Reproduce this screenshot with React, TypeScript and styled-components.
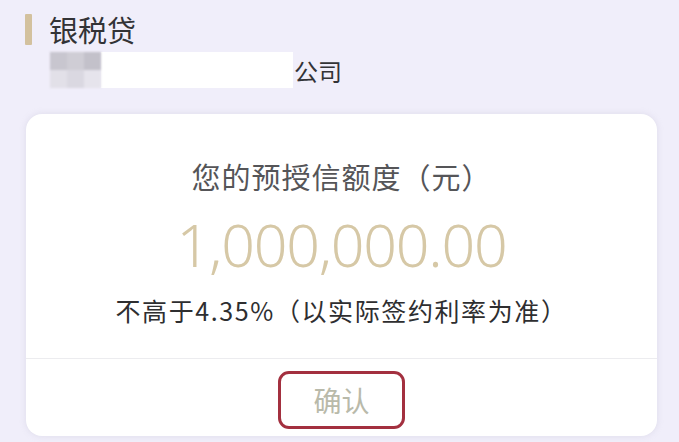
import styled, { createGlobalStyle } from 'styled-components'

const GlobalStyle = createGlobalStyle`
  html, body {
    margin: 0;
    padding: 0;
    background: #f0eefa;
  }
  body {
    font-family: "Noto Sans CJK SC", "Noto Sans", sans-serif;
    width: 679px;
    height: 442px;
    overflow: hidden;
  }
`

const MOSAIC = ['#c8c6cf', '#cfcdd5', '#c3c1ca', '#e2e0e8', '#dad8e1', '#e6e4ec']

const App = () => {
  return (
    <Page>
      <GlobalStyle />
      <Header>
        <Accent />
        <Title>银税贷</Title>
      </Header>
      <CompanyRow>
        <Mosaic>
          {MOSAIC.map((c, i) => (
            <Tile key={i} $color={c} />
          ))}
        </Mosaic>
        <Masked />
        <CompanyName>公司</CompanyName>
      </CompanyRow>
      <Card>
        <CardBody>
          <Label>您的预授信额度（元）</Label>
          <Amount>1,000,000.00</Amount>
          <Rate>不高于4.35%（以实际签约利率为准）</Rate>
        </CardBody>
        <CardFooter>
          <ConfirmButton>确认</ConfirmButton>
        </CardFooter>
      </Card>
    </Page>
  )
}

const Page = styled.div`
  display: flex;
  flex-direction: column;
  padding: 13px 22px 0 22px;
`

const Header = styled.div`
  display: flex;
  align-items: center;
  gap: 17px;
  height: 32px;
`

const Accent = styled.div`
  width: 7px;
  height: 31px;
  margin-left: 3px;
  border-radius: 1px;
  background: #d3c19e;
`

const Title = styled.h1`
  margin: 0;
  font-size: 29px;
  font-weight: 400;
  color: #333336;
  line-height: 32px;
`

const CompanyRow = styled.div`
  display: flex;
  align-items: center;
  margin-top: 7px;
  margin-left: 28px;
  height: 36px;
`

const Mosaic = styled.div`
  display: grid;
  grid-template-columns: repeat(3, 17px);
  grid-template-rows: repeat(2, 18px);
  filter: blur(1px);
`

const Tile = styled.div<{ $color: string }>`
  background: ${({ $color }) => $color};
`

const Masked = styled.div`
  width: 192px;
  height: 36px;
  background: #ffffff;
`

const CompanyName = styled.span`
  font-size: 24px;
  color: #333336;
  margin-left: 1px;
`

const Card = styled.div`
  margin-top: 26px;
  margin-left: 4px;
  width: 631px;
  background: #ffffff;
  border-radius: 16px;
  box-shadow: 0 0 6px rgba(180, 175, 200, 0.3);
  display: flex;
  flex-direction: column;
`

const CardBody = styled.div`
  display: flex;
  flex-direction: column;
  align-items: center;
  padding: 44px 0 31px;
  border-bottom: 1px solid #ececef;
`

const Label = styled.div`
  font-size: 29px;
  letter-spacing: 1px;
  color: #555558;
  line-height: 36px;
`

const Amount = styled.div`
  font-family: "Noto Sans", sans-serif;
  font-weight: 300;
  font-size: 59px;
  letter-spacing: -1.2px;
  color: #d6c8a6;
  line-height: 70px;
  margin-top: 15px;
`

const Rate = styled.div`
  font-size: 25px;
  letter-spacing: 1.6px;
  color: #2e2e30;
  line-height: 34px;
  margin-top: 14px;
`

const CardFooter = styled.div`
  display: flex;
  justify-content: center;
  padding: 12px 0 7px;
`

const ConfirmButton = styled.button`
  width: 127px;
  height: 58px;
  border: 3px solid #a3303f;
  border-radius: 11px;
  background: #ffffff;
  color: #b9baaa;
  font-family: "Noto Sans CJK SC", sans-serif;
  font-size: 28px;
  padding: 0;
`

export default App
